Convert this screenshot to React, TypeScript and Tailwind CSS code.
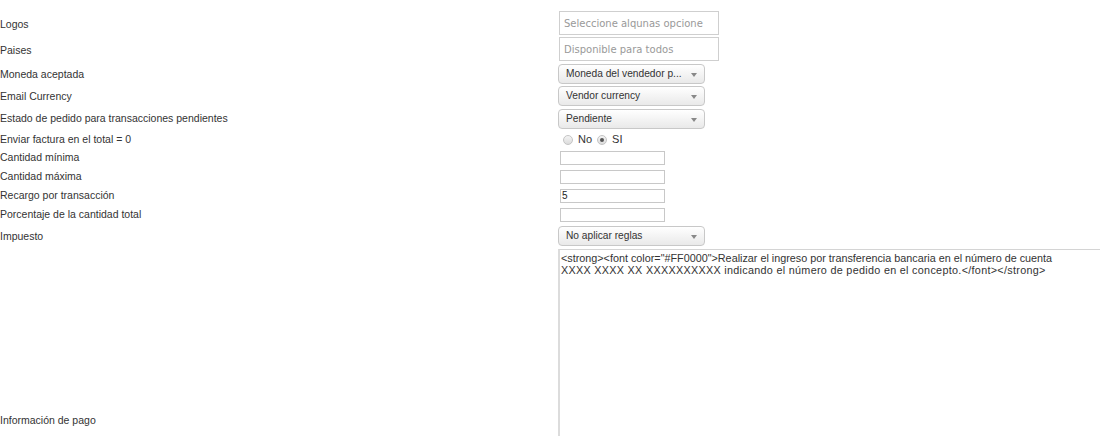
import type React from "react"

// Fila del formulario: etiqueta a la izquierda, control a la derecha
interface FieldRowProps {
  label: string
  height: string
  children: React.ReactNode
}

const FieldRow: React.FC<FieldRowProps> = ({ label, height, children }) => (
  <div className={`flex items-center ${height}`}>
    <div className="w-[558px] shrink-0 pt-[1px] text-[10.5px] text-[#333]">{label}</div>
    <div className="flex items-center">{children}</div>
  </div>
)

const FakeSelect: React.FC<{ value: string }> = ({ value }) => (
  <div className="relative flex h-[20px] w-[147px] items-center rounded-[4px] border border-[#c8c8c8] bg-gradient-to-b from-[#ffffff] to-[#e9e9e9] pl-[7px] text-[10.2px] text-[#333]">
    <span className="whitespace-nowrap">{value}</span>
    <span className="absolute right-[7px] top-[8px] h-0 w-0 border-x-[3px] border-t-[4px] border-x-transparent border-t-[#888]" />
  </div>
)

const Radio: React.FC<{ checked?: boolean }> = ({ checked }) => (
  <span className="flex h-[10px] w-[10px] items-center justify-center rounded-full border border-[#c4c4c4] bg-gradient-to-b from-[#f4f4f4] to-[#dcdcdc]">
    {checked && <span className="h-[4px] w-[4px] rounded-full bg-[#555]" />}
  </span>
)

const SmallInput: React.FC<{ value?: string }> = ({ value }) => (
  <div className="ml-[2px] flex h-[14px] w-[105px] items-center border border-[#c8c8c8] bg-white pl-[1px] text-[10px] text-[#222]">
    {value}
  </div>
)

const TextBox: React.FC<{ placeholder: string }> = ({ placeholder }) => (
  <div className="mb-[2px] ml-[1px] flex h-[24px] w-[160px] items-center border border-[#cfcfcf] pl-[4px]">
    <span className="w-[140px] overflow-hidden whitespace-nowrap font-['DejaVu_Sans',sans-serif] text-[10px] text-[#999]">
      {placeholder}
    </span>
  </div>
)

export default function App() {
  return (
    <div className="h-[436px] w-[1100px] overflow-hidden bg-white pt-[11px] font-['Liberation_Sans',Arial,sans-serif]">
      <FieldRow label="Logos" height="h-[26px]">
        <TextBox placeholder="Seleccione alqunas opcione" />
      </FieldRow>
      <FieldRow label="Paises" height="h-[26px]">
        <TextBox placeholder="Disponible para todos" />
      </FieldRow>
      <FieldRow label="Moneda aceptada" height="h-[22px]">
        <FakeSelect value="Moneda del vendedor p..." />
      </FieldRow>
      <FieldRow label="Email Currency" height="h-[22px]">
        <FakeSelect value="Vendor currency" />
      </FieldRow>
      <FieldRow label="Estado de pedido para transacciones pendientes" height="h-[23px]">
        <FakeSelect value="Pendiente" />
      </FieldRow>
      <FieldRow label="Enviar factura en el total = 0" height="h-[18px]">
        <div className="ml-[5px] mt-[1px] flex items-center text-[11px] text-[#333]">
          <Radio />
          <span className="ml-[5px]">No</span>
          <span className="ml-[5px]">
            <Radio checked />
          </span>
          <span className="ml-[5px]">SI</span>
        </div>
      </FieldRow>
      <FieldRow label="Cantidad mínima" height="h-[19px]">
        <SmallInput />
      </FieldRow>
      <FieldRow label="Cantidad máxima" height="h-[19px]">
        <SmallInput />
      </FieldRow>
      <FieldRow label="Recargo por transacción" height="h-[19px]">
        <SmallInput value="5" />
      </FieldRow>
      <FieldRow label="Porcentaje de la cantidad total" height="h-[19px]">
        <SmallInput />
      </FieldRow>
      <FieldRow label="Impuesto" height="h-[24px]">
        <FakeSelect value="No aplicar reglas" />
      </FieldRow>
      <div className="mt-[1px] flex items-center">
        <div className="w-[558px] shrink-0 pt-[3px] text-[10.5px] text-[#333]">Información de pago</div>
        <div className="h-[340px] w-[560px] shrink-0 whitespace-nowrap border border-l-2 border-[#d4d4d4] border-l-[#dcdcdc] px-[1px] pt-[2px] text-[10.8px] leading-[12px] text-[#333]">
          <div>{'<strong><font color="#FF0000">Realizar el ingreso por transferencia bancaria en el número de cuenta'}</div>
          <div className="tracking-[0.3px]">
            {'XXXX XXXX XX XXXXXXXXXX indicando el número de pedido en el concepto.</font></strong>'}
          </div>
        </div>
      </div>
    </div>
  )
}
